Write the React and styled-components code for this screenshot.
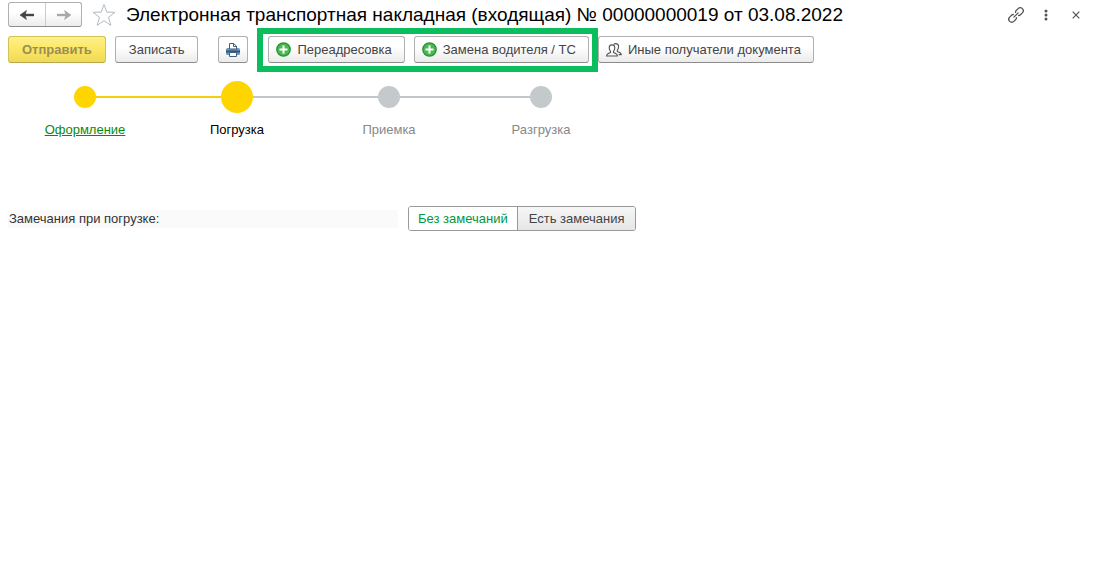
import React, { useState } from 'react'
import styled, { createGlobalStyle } from 'styled-components'

const GlobalStyle = createGlobalStyle`
  * {
    box-sizing: border-box;
  }
  body {
    margin: 0;
    background: #fff;
    color: #333;
    font: 13px/16px 'Liberation Sans', Arial, sans-serif;
  }
  button {
    font: inherit;
    cursor: pointer;
  }
`

const Page = styled.main`
  padding: 2px 2px 2px 8px;
`

const Header = styled.header`
  display: flex;
  align-items: center;
  height: 25px;
`

const History = styled.div`
  display: flex;
  height: 25px;
  border: 1px solid #b0b0b0;
  border-bottom-color: #8c8c8c;
  border-radius: 3px;
  background: linear-gradient(#fff 40%, #ececec);
`

const HistoryButton = styled.button`
  display: flex;
  align-items: center;
  justify-content: center;
  width: 36px;
  padding: 0;
  border: 0;
  background: none;
  color: ${props => props.$muted ? '#a8a8a8' : '#444'};
  & + & {
    border-left: 1px solid #ccc;
  }
`

const IconButton = styled.button`
  display: flex;
  align-items: center;
  justify-content: center;
  width: ${props => props.$wide ? '24px' : '30px'};
  height: 24px;
  padding: 0;
  border: 0;
  background: none;
  color: #555;
`

const Title = styled.h1`
  flex: 1;
  margin: 0 0 0 10px;
  color: #000;
  font-size: 19px;
  line-height: 24px;
  font-weight: normal;
  white-space: nowrap;
`

const Favorite = styled.div`
  margin-left: 10px;
`

const Toolbar = styled.div`
  display: flex;
  gap: 9px;
  margin-top: 9px;
`

const Button = styled.button`
  display: flex;
  align-items: center;
  justify-content: center;
  gap: 6px;
  height: 27px;
  padding: 0 ${props => props.$square ? '6px' : '13px'};
  ${props => props.$icon && 'padding: 0 12px 0 7px;'}
  border: 1px solid ${props => props.$primary ? '#d3c256' : '#b0b0b0'};
  border-bottom-color: ${props => props.$primary ? '#b9a94a' : '#8c8c8c'};
  border-radius: 3px;
  background: ${props => props.$primary
    ? 'linear-gradient(#fff08a, #fbe764 50%, #eeda58)'
    : 'linear-gradient(#fff 40%, #ebebeb)'};
  color: ${props => props.$primary ? '#9a8f50' : '#444'};
  font-weight: ${props => props.$primary ? 'bold' : 'normal'};
  white-space: nowrap;
`

const PrintSlot = styled.div`
  margin: 0 11px;
`

const Highlighted = styled.div`
  position: relative;
  display: flex;
  gap: 9px;
  &::after {
    content: '';
    position: absolute;
    inset: -8px -9px -9px -11px;
    border: 6px solid #0bbd5c;
    pointer-events: none;
  }
`

const Steps = styled.ol`
  display: grid;
  grid-template-columns: repeat(4, 152px);
  margin: 18px 0 0 1px;
  padding: 0;
  list-style: none;
  text-align: center;
`

const Track = styled.div`
  display: flex;
  align-items: center;
  height: 32px;
  &::before,
  &::after {
    content: '';
    flex: 1;
    height: 2px;
  }
  &::before {
    background: ${props => props.$before};
  }
  &::after {
    background: ${props => props.$after};
  }
`

const Dot = styled.span`
  width: ${props => props.$current ? '32px' : '22px'};
  height: ${props => props.$current ? '32px' : '22px'};
  border-radius: 50%;
  background: ${props => props.$done ? '#ffd500' : '#c4cacc'};
`

const StepLabel = styled.div`
  margin-top: 9px;
  color: ${props => props.$current ? '#000' : '#888'};
  a {
    color: #0a8a0a;
  }
`

const Remarks = styled.fieldset`
  display: flex;
  align-items: center;
  gap: 10px;
  margin: 68px 0 0;
  padding: 0;
  border: 0;
`

const RemarksLabel = styled.div`
  flex: 0 1 390px;
  padding: 1px;
  background: #fafafa;
`

const Segments = styled.div`
  display: flex;
  height: 25px;
  border: 1px solid #999;
  border-radius: 3px;
  overflow: hidden;
`

const Segment = styled.label`
  position: relative;
  display: flex;
  align-items: center;
  padding: 0 ${props => props.$last ? '11px' : '9px'};
  background: ${props => props.$active ? '#fff' : 'linear-gradient(#f6f6f6, #e6e6e6)'};
  color: ${props => props.$active ? '#009646' : '#444'};
  white-space: nowrap;
  cursor: pointer;
  & + & {
    border-left: 1px solid #999;
  }
  input {
    position: absolute;
    inset: 0;
    margin: 0;
    opacity: 0;
  }
`

const ArrowIcon = ({ right }) => (
  <svg width="16" height="12" viewBox="0 0 16 12">
    <path d={right ? 'M1 6h9' : 'M15 6H6'} stroke="currentColor" strokeWidth="2.400" />
    <path
      d={right ? 'M8.500 1.500L15 6l-6.500 4.500L10 6z' : 'M7.500 1.500L1 6l6.500 4.500L6 6z'}
      fill="currentColor"
      stroke="currentColor"
      strokeWidth=".6"
    />
  </svg>
)

const StarIcon = () => (
  <svg width="24" height="24" viewBox="0 0 24 24">
    <path
      d="M12 1.500l2.800 7.600 8.200.2-6.500 5 2.300 8L12 17.700l-6.800 4.600 2.300-8-6.500-5 8.200-.2z"
      fill="#fff"
      stroke="#b3bac1"
    />
  </svg>
)

const LinkIcon = () => (
  <svg width="18" height="18" viewBox="0 0 18 18">
    <g fill="none" stroke="currentColor" strokeWidth="1.300" strokeLinecap="round" transform="rotate(-45 9 9)">
      <path d="M7.500 11.200c-.5.500-1 .8-1.800.8H3a3 3 0 0 1 0-6h2.700c.8 0 1.300.3 1.800.8" />
      <path d="M10.500 6.800c.5-.5 1-.8 1.800-.8H15a3 3 0 0 1 0 6h-2.700c-.8 0-1.300-.3-1.800-.8" />
      <path d="M6 9h6" />
    </g>
  </svg>
)

const MoreIcon = () => (
  <svg width="4" height="12" viewBox="0 0 4 12" fill="currentColor">
    <circle cx="2" cy="2" r="1.500" />
    <circle cx="2" cy="6" r="1.500" />
    <circle cx="2" cy="10" r="1.500" />
  </svg>
)

const CloseIcon = () => (
  <svg width="8" height="8" viewBox="0 0 8 8">
    <path d="M.7.700l6.600 6.600M7.300.700L.7 7.300" stroke="currentColor" strokeWidth="1.200" />
  </svg>
)

const PrintIcon = () => (
  <svg width="16" height="16" viewBox="0 0 16 16">
    <rect x="1" y="6" width="14" height="7" rx="1.500" fill="#7295b5" />
    <path d="M4.500 7V1.500h4L11.500 4v3z" fill="#fff" stroke="#3c5f84" />
    <path d="M8.500 1.500V4.500h3" fill="none" stroke="#3c5f84" />
    <path d="M1 8.500h14v2H1z" fill="#2f557c" />
    <path d="M4.500 10.500h7v4h-7z" fill="#fff" stroke="#3c5f84" />
  </svg>
)

const PlusIcon = () => (
  <svg width="15" height="15" viewBox="0 0 15 15">
    <circle cx="7.500" cy="7.500" r="6.700" fill="#4bb852" stroke="#259331" strokeWidth="1.300" />
    <path d="M7.500 3.500v8M3.500 7.500h8" stroke="#fff" strokeWidth="2" />
  </svg>
)

const PeopleIcon = () => (
  <svg width="16" height="14" viewBox="0 0 16 14" fill="none" stroke="#555" strokeWidth="1.100">
    <path d="M.6 13c0-2 1-2.500 3.900-3.500V8.300C3.400 7.300 3.200 6 3.200 4.800c0-1.900 1.100-2.900 2.800-2.900s2.800 1 2.800 2.900c0 1.200-.2 2.500-1.300 3.500v1.200c2.900 1 3.900 1.500 3.900 3.500z" />
    <path d="M7.600 1.400C8.200.900 8.900.600 9.700.600c1.900 0 2.900 1.200 2.900 3 0 1.400-.3 2.600-1.300 3.500v1.300c2.800.9 3.900 1.400 3.900 3.200h-2.600" />
  </svg>
)

const steps = ['Оформление', 'Погрузка', 'Приемка', 'Разгрузка']
const options = ['Без замечаний', 'Есть замечания']
const current = 1

const lineColor = (i) => {
  if (i < 0 || i >= steps.length - 1) return 'transparent'
  return i < current ? '#f5cf0b' : '#c0c6ca'
}

export default function App() {
  const [remark, setRemark] = useState(options[0])

  return (
    <Page>
      <GlobalStyle />
      <Header>
        <History>
          <HistoryButton aria-label="Назад"><ArrowIcon /></HistoryButton>
          <HistoryButton $muted aria-label="Вперед"><ArrowIcon right /></HistoryButton>
        </History>
        <Favorite>
          <IconButton $wide aria-label="В избранное"><StarIcon /></IconButton>
        </Favorite>
        <Title>Электронная транспортная накладная (входящая) № 00000000019 от 03.08.2022</Title>
        <IconButton aria-label="Ссылка"><LinkIcon /></IconButton>
        <IconButton aria-label="Еще"><MoreIcon /></IconButton>
        <IconButton aria-label="Закрыть"><CloseIcon /></IconButton>
      </Header>

      <Toolbar>
        <Button $primary>Отправить</Button>
        <Button>Записать</Button>
        <PrintSlot>
          <Button $square aria-label="Печать"><PrintIcon /></Button>
        </PrintSlot>
        <Highlighted>
          <Button $icon><PlusIcon />Переадресовка</Button>
          <Button $icon><PlusIcon />Замена водителя / ТС</Button>
        </Highlighted>
        <Button $icon><PeopleIcon />Иные получатели документа</Button>
      </Toolbar>

      <Steps>
        {steps.map((step, i) => (
          <li key={step}>
            <Track $before={lineColor(i - 1)} $after={lineColor(i)}>
              <Dot $current={i === current} $done={i <= current} />
            </Track>
            <StepLabel $current={i === current}>
              {i < current ? <a href="#step">{step}</a> : step}
            </StepLabel>
          </li>
        ))}
      </Steps>

      <Remarks aria-labelledby="remarks">
        <RemarksLabel id="remarks">Замечания при погрузке:</RemarksLabel>
        <Segments>
          {options.map((option, i) => (
            <Segment key={option} $active={remark === option} $last={i === options.length - 1}>
              <input
                type="radio"
                name="remark"
                checked={remark === option}
                onChange={() => setRemark(option)}
              />
              {option}
            </Segment>
          ))}
        </Segments>
      </Remarks>
    </Page>
  )
}
